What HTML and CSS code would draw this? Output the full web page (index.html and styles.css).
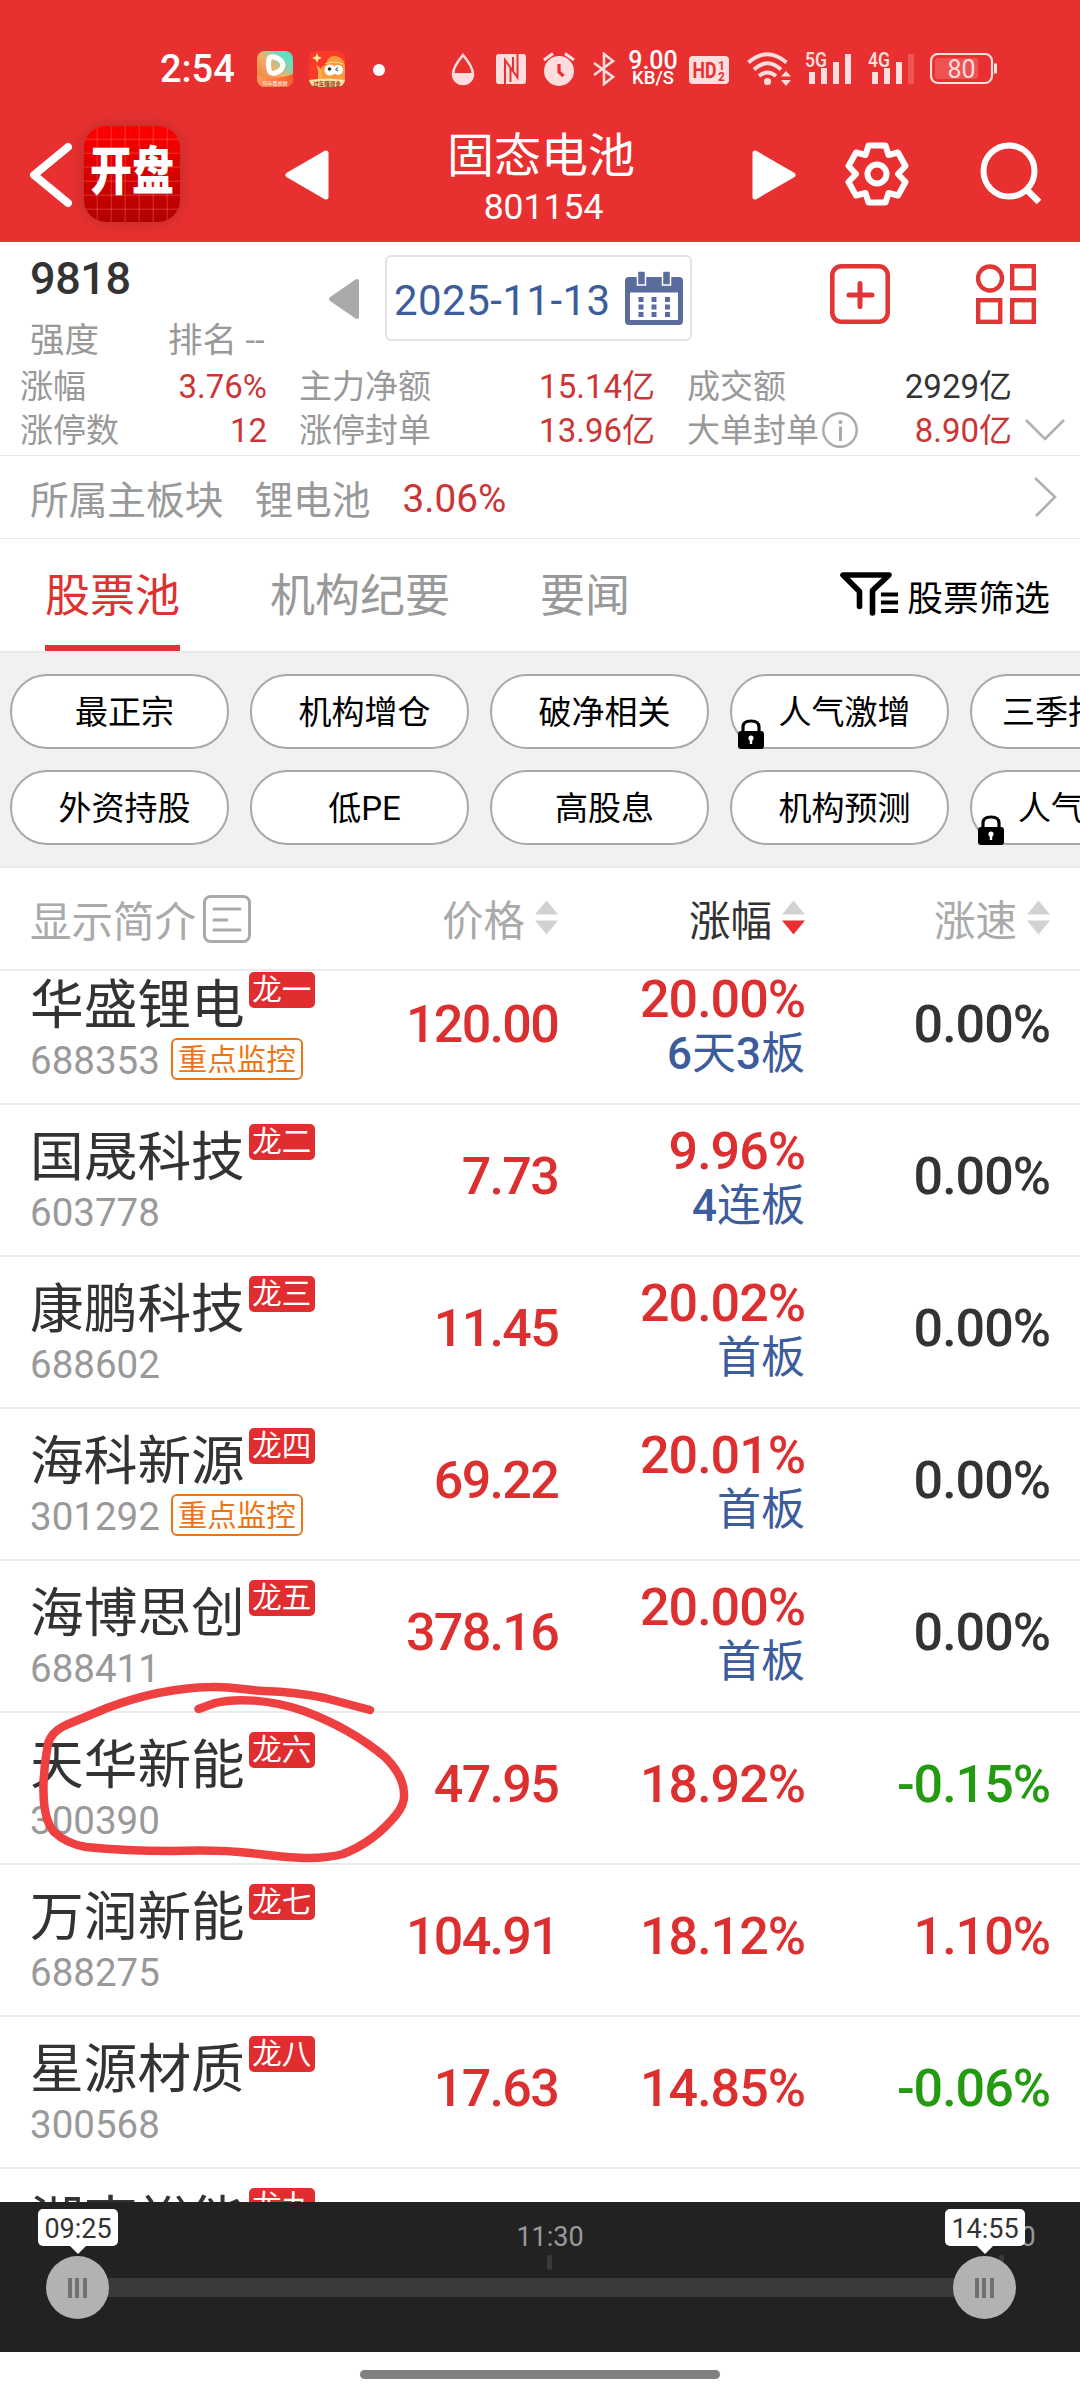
FILE: index.html
```html
<!DOCTYPE html>
<html lang="zh-CN">
<head>
<meta charset="utf-8">
<title>固态电池 801154</title>
<link rel="stylesheet" href="styles.css">
</head>
<body>
<header class="top">
  <div class="status">
    <span class="clock">2:54</span>
    <svg class="app1" width="36" height="36" viewBox="0 0 36 36">
      <defs>
        <linearGradient id="g1" x1="0" y1="1" x2="1" y2="0"><stop offset="0" stop-color="#f9702c"/><stop offset=".5" stop-color="#eeb070"/><stop offset=".8" stop-color="#62e0c0"/></linearGradient>
        <linearGradient id="g2" x1="0" y1="0" x2="1" y2="0"><stop offset="0" stop-color="#ff9a5c"/><stop offset="1" stop-color="#fb5a26"/></linearGradient>
        <clipPath id="c1"><rect width="36" height="36" rx="8"/></clipPath>
      </defs>
      <g clip-path="url(#c1)"><rect width="36" height="36" fill="url(#g1)"/><path d="M0 24Q18 30 36 23V36H0Z" fill="url(#g2)"/></g>
      <path d="M12 8q1-3 5-2q8 2 9 8q-1 6-8 8q-6 1-6-4q-1-5 0-10z" fill="none" stroke="#fff" stroke-width="5" stroke-linejoin="round"/>
      <text x="18" y="33.5" text-anchor="middle" font-size="5" fill="#fff">马年看视频</text>
    </svg>
    <svg class="app2" width="36" height="36" viewBox="0 0 36 36">
      <defs><clipPath id="c2"><rect width="36" height="36" rx="8"/></clipPath></defs>
      <g clip-path="url(#c2)"><rect width="36" height="36" fill="#fb3a2a"/><path d="M11 36V20q1-5 6-6Q18 5 26 5q9 1 10 10V36Z" fill="#fb9a3c"/><path d="M9 30V20l-2-7 5 5 2 12z" fill="#ffb04a"/><path d="M0 29Q18 26 36 29V36H0Z" fill="#ffe0a6"/></g>
      <circle cx="21" cy="19" r="5.5" fill="#fff"/><circle cx="29" cy="19" r="5" fill="#fff"/><circle cx="20.500" cy="18" r="1.800" fill="#333"/><path d="M29 16.500l-2.500 2 2.500 1.500" fill="none" stroke="#333"/>
      <path d="M8 2l1.500 3.500L13 7l-3.500 1.500L8 12 6.500 8.500 3 7l3.500-1.500z" fill="#ffe9a0"/><path d="M16 13q8-4 18 0" fill="none" stroke="#ffe08a"/>
      <text x="18" y="34.500" text-anchor="middle" font-size="5.500" font-weight="700" fill="#8a3a10">过年赚现金</text>
    </svg>
    <i class="dot"></i>
    <svg class="drop" width="24" height="34" viewBox="0 0 24 34"><path d="M12 3Q2 15 2 22a10 10 0 0 0 20 0Q22 15 12 3Z" fill="none" stroke="#fdd" stroke-width="2.600"/><path d="M2 21H22a10 10.500 0 0 1-20 0z" fill="#fdd"/></svg>
    <svg class="nfc" width="30" height="30" viewBox="0 0 30 30"><rect width="30" height="30" rx="3" fill="#fdd"/><path d="M9 30V6L21.500 23.500V0M14.500 13V28M17 3v14" fill="none" stroke="#e83030" stroke-width="2"/></svg>
    <svg class="alarm" width="32" height="34" viewBox="0 0 32 34"><circle cx="16" cy="19" r="15" fill="#fdd"/><path d="M1 8l9-6.500M31 8l-9-6.500" stroke="#fdd" stroke-width="3"/><path d="M16 12v8l4.500 4" stroke="#e83030" stroke-width="3.200" fill="none"/></svg>
    <svg class="bt" width="22" height="34" viewBox="0 0 22 34"><path d="M1 11l19 14-9 7V2l9 7L1 23" fill="none" stroke="#fdd" stroke-width="2.600"/></svg>
    <span class="speed"><b>9.00</b><small>KB/S</small></span>
    <svg class="hd" width="40" height="28" viewBox="0 0 40 28"><rect width="40" height="28" rx="4" fill="#fdd"/><text x="3.500" y="22" font-size="22" font-weight="700" fill="#e83030" textLength="24" lengthAdjust="spacingAndGlyphs">HD</text><text x="29" y="13.500" font-size="12" font-weight="700" fill="#e83030">1</text><text x="29" y="25" font-size="12" font-weight="700" fill="#e83030">2</text></svg>
    <svg class="wifi" width="44" height="34" viewBox="0 0 44 34"><g fill="none" stroke="#fdd" stroke-width="3.800"><path d="M1.500 10.500Q20 -6 39.500 10.500"/><path d="M7 17.500Q20.500 5 34 17.500"/><path d="M12 24Q20.500 17 29 24"/></g><circle cx="20.500" cy="29.500" r="3.600" fill="#fdd"/><path d="M34 24.500l5-5.500 5 5.500zM34 28h10l-5 6z" fill="#fdd"/></svg>
    <svg class="sig" width="48" height="33" viewBox="0 0 48 33"><text x="0" y="16" font-size="21" font-weight="600" fill="#fdd" textLength="22" lengthAdjust="spacingAndGlyphs">5G</text><path d="M4 21h6v12H4zM16 17h6v16h-6zM28 11h6v22h-6zM40 3h6v30h-6z" fill="#fdd"/></svg>
    <svg class="sig sig2" width="48" height="33" viewBox="0 0 48 33"><text x="0" y="16" font-size="21" font-weight="600" fill="#fdd" textLength="22" lengthAdjust="spacingAndGlyphs">4G</text><path d="M4 21h6v12H4zM16 17h6v16h-6zM28 11h6v22h-6z" fill="#fdd"/><path d="M40 3h6v30h-6z" fill="#ef5555"/></svg>
    <svg class="bat" width="68" height="32" viewBox="0 0 68 32"><rect x="1" y="1" width="61" height="29" rx="7" fill="none" stroke="#fdd" stroke-width="2.200"/><rect x="5" y="5" width="43" height="21" rx="3" fill="#ee5252"/><path d="M65.500 10.500v10" stroke="#fdd" stroke-width="3"/><text x="31.500" y="24.500" text-anchor="middle" font-size="25" fill="#fdd">80</text></svg>
  </div>
  <div class="nav">
    <svg class="back" width="46" height="68" viewBox="0 0 46 68"><path d="M40 6L6 34 40 62" fill="none" stroke="#fff" stroke-width="8" stroke-linecap="round" stroke-linejoin="round"/></svg>
    <div class="logo"><span>开盘</span></div>
    <svg class="prev" width="44" height="50" viewBox="0 0 44 50"><path d="M3 25L41 3V47Z" fill="#fff" stroke="#fff" stroke-width="5" stroke-linejoin="round"/></svg>
    <div class="title"><h1>固态电池</h1><p>801154</p></div>
    <svg class="next" width="44" height="50" viewBox="0 0 44 50"><path d="M41 25L3 3V47Z" fill="#fff" stroke="#fff" stroke-width="5" stroke-linejoin="round"/></svg>
    <svg class="gear" width="64" height="64" viewBox="0 0 64 64"><g fill="none" stroke="#fff" stroke-width="6" stroke-linejoin="round"><path d="M23.500 3.500H40.500L43.500 13 53 10.500 60.500 24 53 32 60.500 40 53 53.500 43.500 51 40.500 60.500H23.500L20.500 51 11 53.500 3.500 40 11 32 3.500 24 11 10.500 20.500 13Z"/><circle cx="32" cy="32" r="9.500"/></g></svg>
    <svg class="search" width="64" height="64" viewBox="0 0 64 64"><circle cx="29" cy="29" r="25.500" fill="none" stroke="#fff" stroke-width="6"/><path d="M47 48L59 60" stroke="#fff" stroke-width="6.500"/></svg>
  </div>
</header>

<section class="summary">
  <div class="lead">
    <div class="score"><strong>9818</strong><div class="rank"><span>强度</span><span>排名 --</span></div></div>
    <svg class="dprev" width="32" height="42" viewBox="0 0 32 42"><path d="M3 21L29 3V39Z" fill="#aaa" stroke="#aaa" stroke-width="4" stroke-linejoin="round"/></svg>
    <div class="date"><span>2025-11-13</span>
      <svg width="58" height="54" viewBox="0 0 58 54"><rect y="6" width="58" height="48" rx="4" fill="#5a6c9e"/><path d="M5 21.500h48V49H5z" fill="#fff"/><path d="M12.500 0h8v14h-8zM37.500 0h8v14h-8z" fill="#5a6c9e" stroke="#fff" stroke-width="1.500"/><path d="M13.500 26h5v5h-5zM26.500 26h5v5h-5zM40 26h5v5h-5zM13.500 33.500h5v5h-5zM26.500 33.500h5v5h-5zM40 33.500h5v5h-5zM13.500 41h5v5h-5zM26.500 41h5v5h-5zM40 41h5v5h-5z" fill="#5a6c9e"/></svg>
    </div>
    <svg class="plus" width="60" height="60" viewBox="0 0 60 60"><g fill="none" stroke="#e03636" stroke-width="4.600"><rect x="2.300" y="2.300" width="55.400" height="55.400" rx="9"/><path d="M30 19.500v23M19 31h23" stroke-width="5" stroke-linecap="round"/></g></svg>
    <svg class="apps" width="60" height="60" viewBox="0 0 60 60"><g fill="none" stroke="#e03636" stroke-width="4.400"><circle cx="14" cy="14.500" r="12"/><rect x="36.200" y="2.200" width="21.600" height="22"/><rect x="2.200" y="36.200" width="22" height="21.600"/><rect x="36.200" y="36.200" width="21.600" height="21.600"/></g></svg>
  </div>
  <div class="stats">
    <span>涨幅</span><em>3.76%</em><span class="c3">主力净额</span><em>15.14亿</em><span class="c5">成交额</span><em class="dark">2929亿</em><i></i>
    <span>涨停数</span><em>12</em><span class="c3">涨停封单</span><em>13.96亿</em><span class="c5 info">大单封单<svg width="36" height="36" viewBox="0 0 36 36"><circle cx="18" cy="18" r="16.700" fill="none" stroke="#aaa" stroke-width="2.400"/><path d="M18.500 14.500V29" stroke="#aaa" stroke-width="3"/><circle cx="18.500" cy="10" r="2.100" fill="#aaa"/></svg></span><em>8.90亿</em>
    <svg class="down" width="40" height="24" viewBox="0 0 40 24"><path d="M1 2L20 21 39 2" fill="none" stroke="#b0b0b0" stroke-width="2.600"/></svg>
  </div>
</section>

<section class="board"><span>所属主板块</span><span class="b2">锂电池</span><em>3.06%</em>
  <svg width="26" height="42" viewBox="0 0 26 42"><path d="M2 2L22 21 3 40" fill="none" stroke="#b0b0b0" stroke-width="2.600"/></svg>
</section>

<nav class="tabs">
  <span class="on">股票池</span><span>机构纪要</span><span>要闻</span>
  <div class="filter"><svg width="58" height="44" viewBox="0 0 58 44"><path d="M19.500 34.500V19.500L3 3H49L32.500 18.500V41" fill="none" stroke="#000" stroke-width="5.600" stroke-linecap="round" stroke-linejoin="round"/><path d="M41 22.500H58M41 30.500H58M41 39H58" stroke="#000" stroke-width="4"/></svg>股票筛选</div>
</nav>

<section class="chips">
  <span>最正宗</span><span>机构增仓</span><span>破净相关</span>
  <span>人气激增<svg class="lock" width="26" height="30" viewBox="0 0 26 30"><path d="M5 14V8q0-6 8-6t8 6v6" fill="none" stroke="#000" stroke-width="3.200"/><rect y="12" width="26" height="18" rx="3"/><circle cx="13" cy="19" r="2.600" fill="#fff"/><path d="M13 19v6" stroke="#fff" stroke-width="2.400"/></svg></span>
  <span class="cut cut1">三季报</span>
  <span>外资持股</span><span>低PE</span><span>高股息</span><span>机构预测</span>
  <span class="cut cut2">人气<svg class="lock" width="26" height="30" viewBox="0 0 26 30"><path d="M5 14V8q0-6 8-6t8 6v6" fill="none" stroke="#000" stroke-width="3.200"/><rect y="12" width="26" height="18" rx="3"/><circle cx="13" cy="19" r="2.600" fill="#fff"/><path d="M13 19v6" stroke="#fff" stroke-width="2.400"/></svg></span>
</section>

<div class="grid thead">
  <div class="intro">显示简介<svg width="48" height="48" viewBox="0 0 48 48"><rect x="1.500" y="1.500" width="45" height="45" rx="6" fill="none" stroke="#aaa" stroke-width="3"/><path d="M11 14H37M11 25H24M11 35H37" stroke="#aaa" stroke-width="3" stroke-linecap="round"/></svg></div>
  <div>价格<i class="sort"></i></div>
  <div class="active">涨幅<i class="sort desc"></i></div>
  <div>涨速<i class="sort"></i></div>
</div>

<main class="list">
  <div class="grid row"><div><div class="name">华盛锂电<b>龙一</b></div><div class="code">688353<u>重点监控</u></div></div><div class="num price">120.00</div><div class="num two">20.00<i>%</i><p><b>6</b>天<b>3</b>板</p></div><div class="num flat">0.00<i>%</i></div></div>
  <div class="grid row"><div><div class="name">国晟科技<b>龙二</b></div><div class="code">603778</div></div><div class="num price">7.73</div><div class="num two">9.96<i>%</i><p><b>4</b>连板</p></div><div class="num flat">0.00<i>%</i></div></div>
  <div class="grid row"><div><div class="name">康鹏科技<b>龙三</b></div><div class="code">688602</div></div><div class="num price">11.45</div><div class="num two">20.02<i>%</i><p>首板</p></div><div class="num flat">0.00<i>%</i></div></div>
  <div class="grid row"><div><div class="name">海科新源<b>龙四</b></div><div class="code">301292<u>重点监控</u></div></div><div class="num price">69.22</div><div class="num two">20.01<i>%</i><p>首板</p></div><div class="num flat">0.00<i>%</i></div></div>
  <div class="grid row"><div><div class="name">海博思创<b>龙五</b></div><div class="code">688411</div></div><div class="num price">378.16</div><div class="num two">20.00<i>%</i><p>首板</p></div><div class="num flat">0.00<i>%</i></div></div>
  <div class="grid row"><div><div class="name">天华新能<b>龙六</b></div><div class="code">300390</div></div><div class="num price">47.95</div><div class="num">18.92<i>%</i></div><div class="num fall">-0.15<i>%</i></div></div>
  <div class="grid row"><div><div class="name">万润新能<b>龙七</b></div><div class="code">688275</div></div><div class="num price">104.91</div><div class="num">18.12<i>%</i></div><div class="num">1.10<i>%</i></div></div>
  <div class="grid row"><div><div class="name">星源材质<b>龙八</b></div><div class="code">300568</div></div><div class="num price">17.63</div><div class="num">14.85<i>%</i></div><div class="num fall">-0.06<i>%</i></div></div>
  <div class="grid row"><div><div class="name">湖南裕能<b>龙九</b></div></div></div>
</main>

<footer class="timeline">
  <div class="track"></div>
  <span class="mark m1">11:30</span><span class="mark m2">15:00</span>
  <div class="handle h1"><span>09:25</span><i></i></div>
  <div class="handle h2"><span>14:55</span><i></i></div>
</footer>
<div class="home"><i></i></div>

<svg class="scribble" width="380" height="190" viewBox="36 1676 380 190"><path d="M370 1710L325 1698Q296 1692 264 1691C245 1690 230 1686 211 1687Q160 1688 107 1708L66 1725Q51 1732 48 1744Q43 1770 43.500 1793Q44 1820 54 1832Q67 1844 86 1847Q125 1851 171 1851C200 1850 225 1850 250 1853C275 1856 315 1862 343 1854Q374 1842 396 1815Q405 1804 404 1794Q404 1776 385 1757Q350 1728 304 1711C270 1699 235 1698 215 1703L198.500 1709" fill="none" stroke="#ee4040" stroke-width="8.500" stroke-linecap="round" stroke-linejoin="round"/></svg>
</body>
</html>
```
FILE: styles.css
```css
* { box-sizing: border-box; margin: 0; padding: 0; }
body {
  position: relative; width: 1080px; height: 2400px; overflow: hidden; background: #fff;
  font-family: Roboto, "Noto Sans CJK SC", sans-serif; color: #333;
}
svg { display: block; flex: none; }
text { font-family: Roboto, "Noto Sans CJK SC", sans-serif; }
i, em { font-style: normal; }

.top { height: 242px; background: #e83030; color: #fff; }
.status { height: 110px; padding: 51px 0 0 160px; display: flex; align-items: flex-start; }
.clock { width: 97px; font-size: 38px; line-height: 36px; font-weight: 500; white-space: nowrap; }
.app2 { margin-left: 16px; }
.dot { flex: none; width: 12px; height: 12px; border-radius: 50%; background: #fff; margin: 13px 0 0 28px; }
.drop { margin: 1px 0 0 66px; }
.nfc { margin: 3px 0 0 21px; }
.alarm { margin: 1px 0 0 17px; }
.bt { margin: 1px 0 0 18px; }
.speed { width: 52px; margin-left: 12px; display: flex; flex-direction: column; align-items: center; }
.speed b { font-size: 25px; line-height: 19px; font-weight: 500; }
.speed small { font-size: 18.500px; line-height: 17px; font-weight: 500; }
.hd { margin: 5px 0 0 10px; }
.wifi { margin: 1px 0 0 18px; }
.sig { margin: 0 0 0 14px; }
.sig2 { margin-left: 15px; }
.bat { margin: 2px 0 0 14px; }

.nav { height: 132px; display: flex; align-items: flex-start; padding-left: 28px; }
.back { margin-top: 31px; }
.logo {
  flex: none; width: 96px; height: 96px; margin: 16px 0 0 10px; border-radius: 22px; box-shadow: 0 0 14px rgba(90, 40, 40, .35);
  background:
    repeating-linear-gradient(90deg, transparent 0 12px, rgba(255, 120, 120, .28) 13px 14px),
    repeating-linear-gradient(180deg, transparent 0 12px, rgba(255, 120, 120, .28) 13px 14px),
    linear-gradient(#f00, #b00000);
  display: flex; align-items: center; justify-content: center;
}
.logo span { font-size: 42px; font-weight: 900; line-height: 50px; padding-bottom: 2px; transform: scaleY(1.250); white-space: nowrap; }
.prev { margin: 40px 0 0 105px; }
.title { width: 190px; margin: 15px 0 0 117px; text-align: center; }
.title h1 { font-size: 47px; line-height: 62px; font-weight: 400; white-space: nowrap; }
.title p { font-size: 35.500px; line-height: 36px; margin-top: 2px; padding-left: 5px; }
.next { margin: 40px 0 0 116px; }
.gear { margin: 32px 0 0 49px; }
.search { margin: 32px 0 0 71px; }

.summary { height: 214px; border-bottom: 1px solid #e6e6e6; }
.lead { height: 122px; display: flex; padding: 13px 0 0 30px; }
.score { width: 298px; }
.score strong { display: block; font-size: 45px; line-height: 48px; letter-spacing: -.4px; font-weight: 500; }
.rank { display: flex; margin-top: 15px; font-size: 34.500px; line-height: 44px; color: #999; }
.rank span { width: 138px; white-space: nowrap; }
.dprev { margin-top: 23px; }
.date { width: 307px; height: 86px; margin-left: 25px; border: 2px solid #e2e2e2; border-radius: 6px; display: flex; align-items: center; padding-left: 7px; color: #3d5c9c; }
.date span { width: 231px; font-size: 42px; white-space: nowrap; letter-spacing: .45px; padding-top: 4px; }
.plus { margin: 9px 0 0 138px; }
.apps { margin: 9px 0 0 86px; }
.stats {
  display: grid; grid-template-columns: 111px 136px 168px 220px 187px 170px 1fr; grid-auto-rows: 44px;
  padding-left: 20px; padding-top: 1px; font-size: 33px; line-height: 44px; color: #999; white-space: nowrap;
}
.stats em { text-align: right; color: #cc3535; }
.stats .dark { color: #333; }
.c3 { padding-left: 32px; }
.c5 { padding-left: 32px; }
.info { display: flex; align-items: center; gap: 3px; }
.info svg { margin-top: -3px; }
.down { margin: 9px 0 0 13px; }

.board { height: 83px; border-bottom: 1px solid #e6e6e6; display: flex; align-items: center; padding-left: 30px; font-size: 38.700px; color: #999; }
.b2 { margin-left: 31px; }
.board em { color: #cc3535; margin-left: 32px; padding-top: 2px; }
.board svg { margin-left: auto; margin-right: 21px; }

.tabs { height: 112px; display: flex; padding-left: 45px; font-size: 45px; line-height: 116px; color: #999; }
.tabs span { margin-right: 90px; }
.tabs .on { height: 112px; color: #dc3232; border-bottom: 6px solid #e03333; }
.filter { margin: 2px 30px 0 auto; display: flex; align-items: flex-start; gap: 9px; color: #000; font-size: 35.700px; }
.filter svg { margin-top: 31px; }

.chips {
  height: 217px; background: #f1f1f1; border-top: 2px solid #eaeaea; border-bottom: 2px solid #eaeaea; overflow: hidden;
  display: grid; grid-template-columns: repeat(5, 219px); gap: 21px; padding: 21px 0 0 10px; grid-auto-rows: 75px;
}
.chips span { position: relative; border: 2px solid #a8a8a8; border-radius: 37px; background: #fff; color: #000; font-size: 33px; line-height: 73px; text-align: center; padding-left: 10px; white-space: nowrap; }
.chips .cut { text-align: left; }
.chips .cut1 { padding-left: 30px; }
.chips .cut2 { padding-left: 46px; }
.lock { position: absolute; left: 6px; bottom: -2px; }

.grid { display: grid; grid-template-columns: 290px 238px 247px 245px; padding-left: 30px; }
.thead { height: 103px; border-bottom: 2px solid #eaeaea; font-size: 41.500px; color: #aaa; }
.thead div { height: 101px; display: flex; align-items: center; justify-content: flex-end; padding-bottom: 2px; }
.thead .intro { height: 104px; justify-content: flex-start; gap: 7px; }
.thead .active { color: #333; }
.sort { margin-left: 10px; width: 23px; height: 34px; flex: none; background: linear-gradient(#d2d2d2, #d2d2d2); clip-path: polygon(50% 0, 100% 41%, 0 41%, 0 59%, 100% 59%, 50% 100%, 0 59%, 0 41%); }
.desc { background: linear-gradient(#d2d2d2 50%, #e83030 50%); }

.list { height: 1231px; overflow: hidden; }
.row { height: 152px; border-bottom: 2px solid #eaeaea; }
.row:first-child { margin-top: -18px; }
.name { height: 66px; padding-top: 19px; display: flex; align-items: flex-start; font-size: 53.700px; line-height: 68px; white-space: nowrap; }
.name b { width: 66px; height: 36px; margin-left: 4px; border-radius: 5px; background: #e02e30; color: #fff; font-size: 29.500px; line-height: 37px; font-weight: 400; text-align: center; }
.code { margin-top: 19px; height: 44px; display: flex; font-size: 38.500px; line-height: 46px; color: #999; }
.code u { width: 132px; height: 42px; margin-left: 11px; border: 2px solid #f07414; border-radius: 6px; color: #f07414; text-decoration: none; font-size: 29.500px; line-height: 40px; text-align: center; white-space: nowrap; }
.num { padding-top: 45px; text-align: right; font-size: 52px; line-height: 54px; font-weight: 500; letter-spacing: -1px; color: #dc3030; }
.price { letter-spacing: -1.700px; }
.two { padding-top: 20px; }
.two p { color: #3d5c9c; font-size: 44px; letter-spacing: 0; font-weight: 400; }
.two b { font-weight: 500; }
.flat { color: #333; }
.fall { color: #239a10; }

.timeline { position: relative; height: 150px; background: #222; }
.track { position: absolute; left: 78px; top: 76px; width: 906px; height: 19px; background: #3a3a3a; }
.mark { position: absolute; top: 21px; width: 80px; text-align: center; font-size: 27px; line-height: 29px; color: #999; }
.mark::after { content: ""; position: absolute; left: 37px; top: 32px; width: 5px; height: 15px; border-radius: 2px; background: #3a3a3a; }
.m1 { left: 510px; }
.m2 { left: 962px; }
.handle { position: absolute; top: 54px; width: 63px; height: 63px; border-radius: 50%; background: #b2b2b2; }
.h1 { left: 46px; }
.h2 { left: 953px; }
.handle span { position: absolute; left: -8px; top: -47px; width: 80px; height: 37px; border-radius: 5px; background: #fff; text-align: center; font-size: 27px; line-height: 40px; }
.handle span::after { content: ""; position: absolute; left: 31px; top: 36px; border: 9px solid transparent; border-top-color: #fff; border-bottom: 0; }
.handle i { position: absolute; left: 22px; top: 22px; width: 19px; height: 20px; background: repeating-linear-gradient(90deg, #707070 0 4px, transparent 4px 7.500px); }
.home { height: 48px; padding: 18px 0 0 360px; }
.home i { display: block; width: 360px; height: 9px; border-radius: 5px; background: #808080; }
.scribble { position: absolute; left: 36px; top: 1676px; }
```
